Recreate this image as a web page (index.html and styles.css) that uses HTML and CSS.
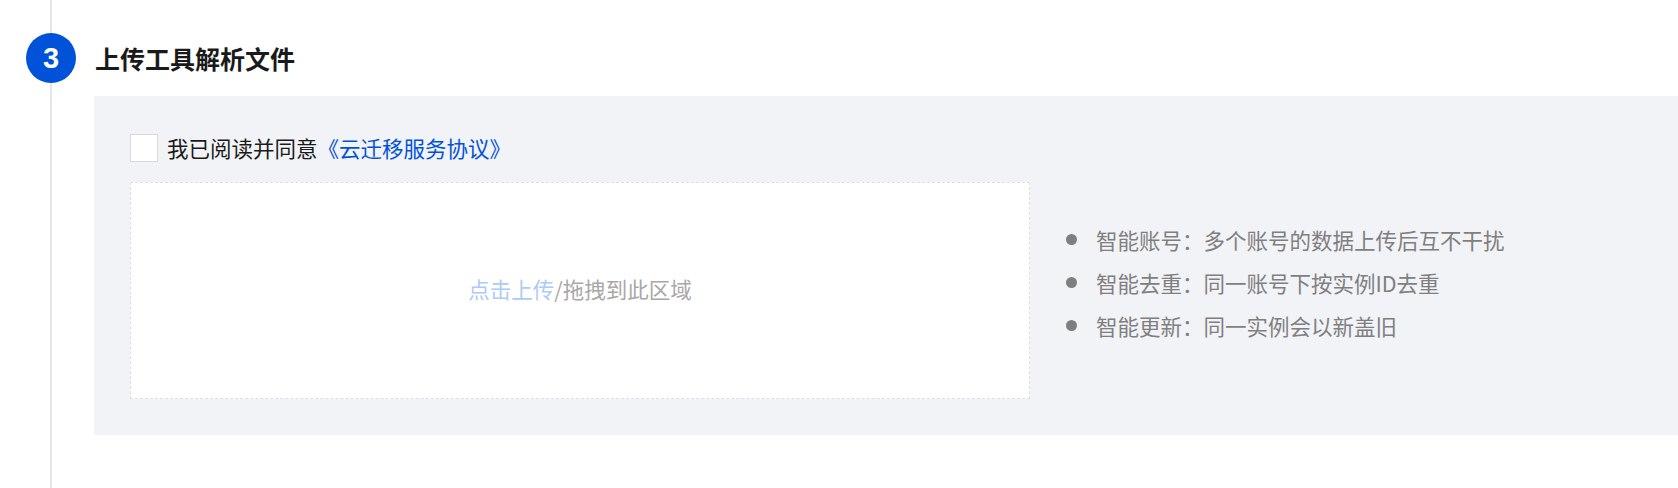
FILE: index.html
```html
<!DOCTYPE html>
<html lang="zh-CN">
<head>
<meta charset="utf-8">
<title>上传工具解析文件</title>
<link rel="stylesheet" href="styles.css">
</head>
<body>
<div class="step">
  <div class="rail">
    <div class="seg seg-top"></div>
    <div class="badge">3</div>
    <div class="seg seg-bottom"></div>
  </div>
  <div class="content">
    <h2 class="title">上传工具解析文件</h2>
    <div class="panel">
      <label class="agree">
        <span class="checkbox"></span>
        <span class="agree-text">我已阅读并同意<a class="link">《云迁移服务协议》</a></span>
      </label>
      <div class="upload-row">
        <div class="dropzone">
          <span class="drop-text"><span class="drop-link">点击上传</span>/拖拽到此区域</span>
        </div>
        <ul class="features">
          <li>智能账号：多个账号的数据上传后互不干扰</li>
          <li>智能去重：同一账号下按实例ID去重</li>
          <li>智能更新：同一实例会以新盖旧</li>
        </ul>
      </div>
    </div>
  </div>
</div>
</body>
</html>
```
FILE: styles.css
```css
html, body {
  margin: 0;
  padding: 0;
  background: #ffffff;
  font-family: "Noto Sans CJK SC", "Noto Sans", sans-serif;
  overflow: hidden;
}

.step {
  display: flex;
  min-height: 488px;
}

.rail {
  display: flex;
  flex-direction: column;
  align-items: center;
  width: 50px;
  margin-left: 26px;
  flex: none;
}

.seg {
  width: 2px;
  background: #e3e6ee;
}

.seg-top {
  height: 33px;
}

.seg-bottom {
  flex: 1;
}

.badge {
  width: 50px;
  height: 50px;
  border-radius: 50%;
  background: #0052d9;
  color: #ffffff;
  font-family: "Liberation Sans", Arial, sans-serif;
  font-weight: 700;
  font-size: 29px;
  line-height: 50px;
  text-align: center;
  flex: none;
}

.content {
  flex: 1;
  margin-left: 18px;
  padding-top: 33px;
  min-width: 0;
}

.title {
  margin: 0;
  padding-left: 1px;
  height: 50px;
  line-height: 50px;
  font-size: 25px;
  font-weight: 700;
  color: #1a1a1a;
}

.panel {
  margin-top: 13px;
  background: #f2f3f7;
  padding: 38px 36px 36px 36px;
}

.agree {
  display: flex;
  align-items: center;
  height: 28px;
}

.checkbox {
  width: 26px;
  height: 26px;
  border: 1px solid #d6d9df;
  background: #ffffff;
  flex: none;
}

.agree-text {
  margin-left: 9px;
  font-size: 21.5px;
  color: #1a1a1a;
  line-height: 28px;
}

.link {
  color: #0052d9;
  text-decoration: none;
}

.upload-row {
  display: flex;
  align-items: center;
  margin-top: 20px;
}

.dropzone {
  box-sizing: border-box;
  width: 900px;
  height: 217px;
  padding-bottom: 5px;
  border: 1px dashed #dcdfe4;
  background: #ffffff;
  display: flex;
  align-items: center;
  justify-content: center;
  flex: none;
}

.drop-text {
  font-size: 21.5px;
  color: #a8a8a8;
}

.drop-link {
  color: #aecaf8;
}

.features {
  list-style: none;
  margin: 0 0 17px 36px;
  padding: 0;
}

.features li {
  display: flex;
  align-items: center;
  height: 43px;
  font-size: 21.5px;
  color: #7f7f7f;
}

.features li::before {
  content: "";
  width: 11px;
  height: 11px;
  border-radius: 50%;
  background: #7f7f7f;
  margin-right: 19px;
  flex: none;
}
```
